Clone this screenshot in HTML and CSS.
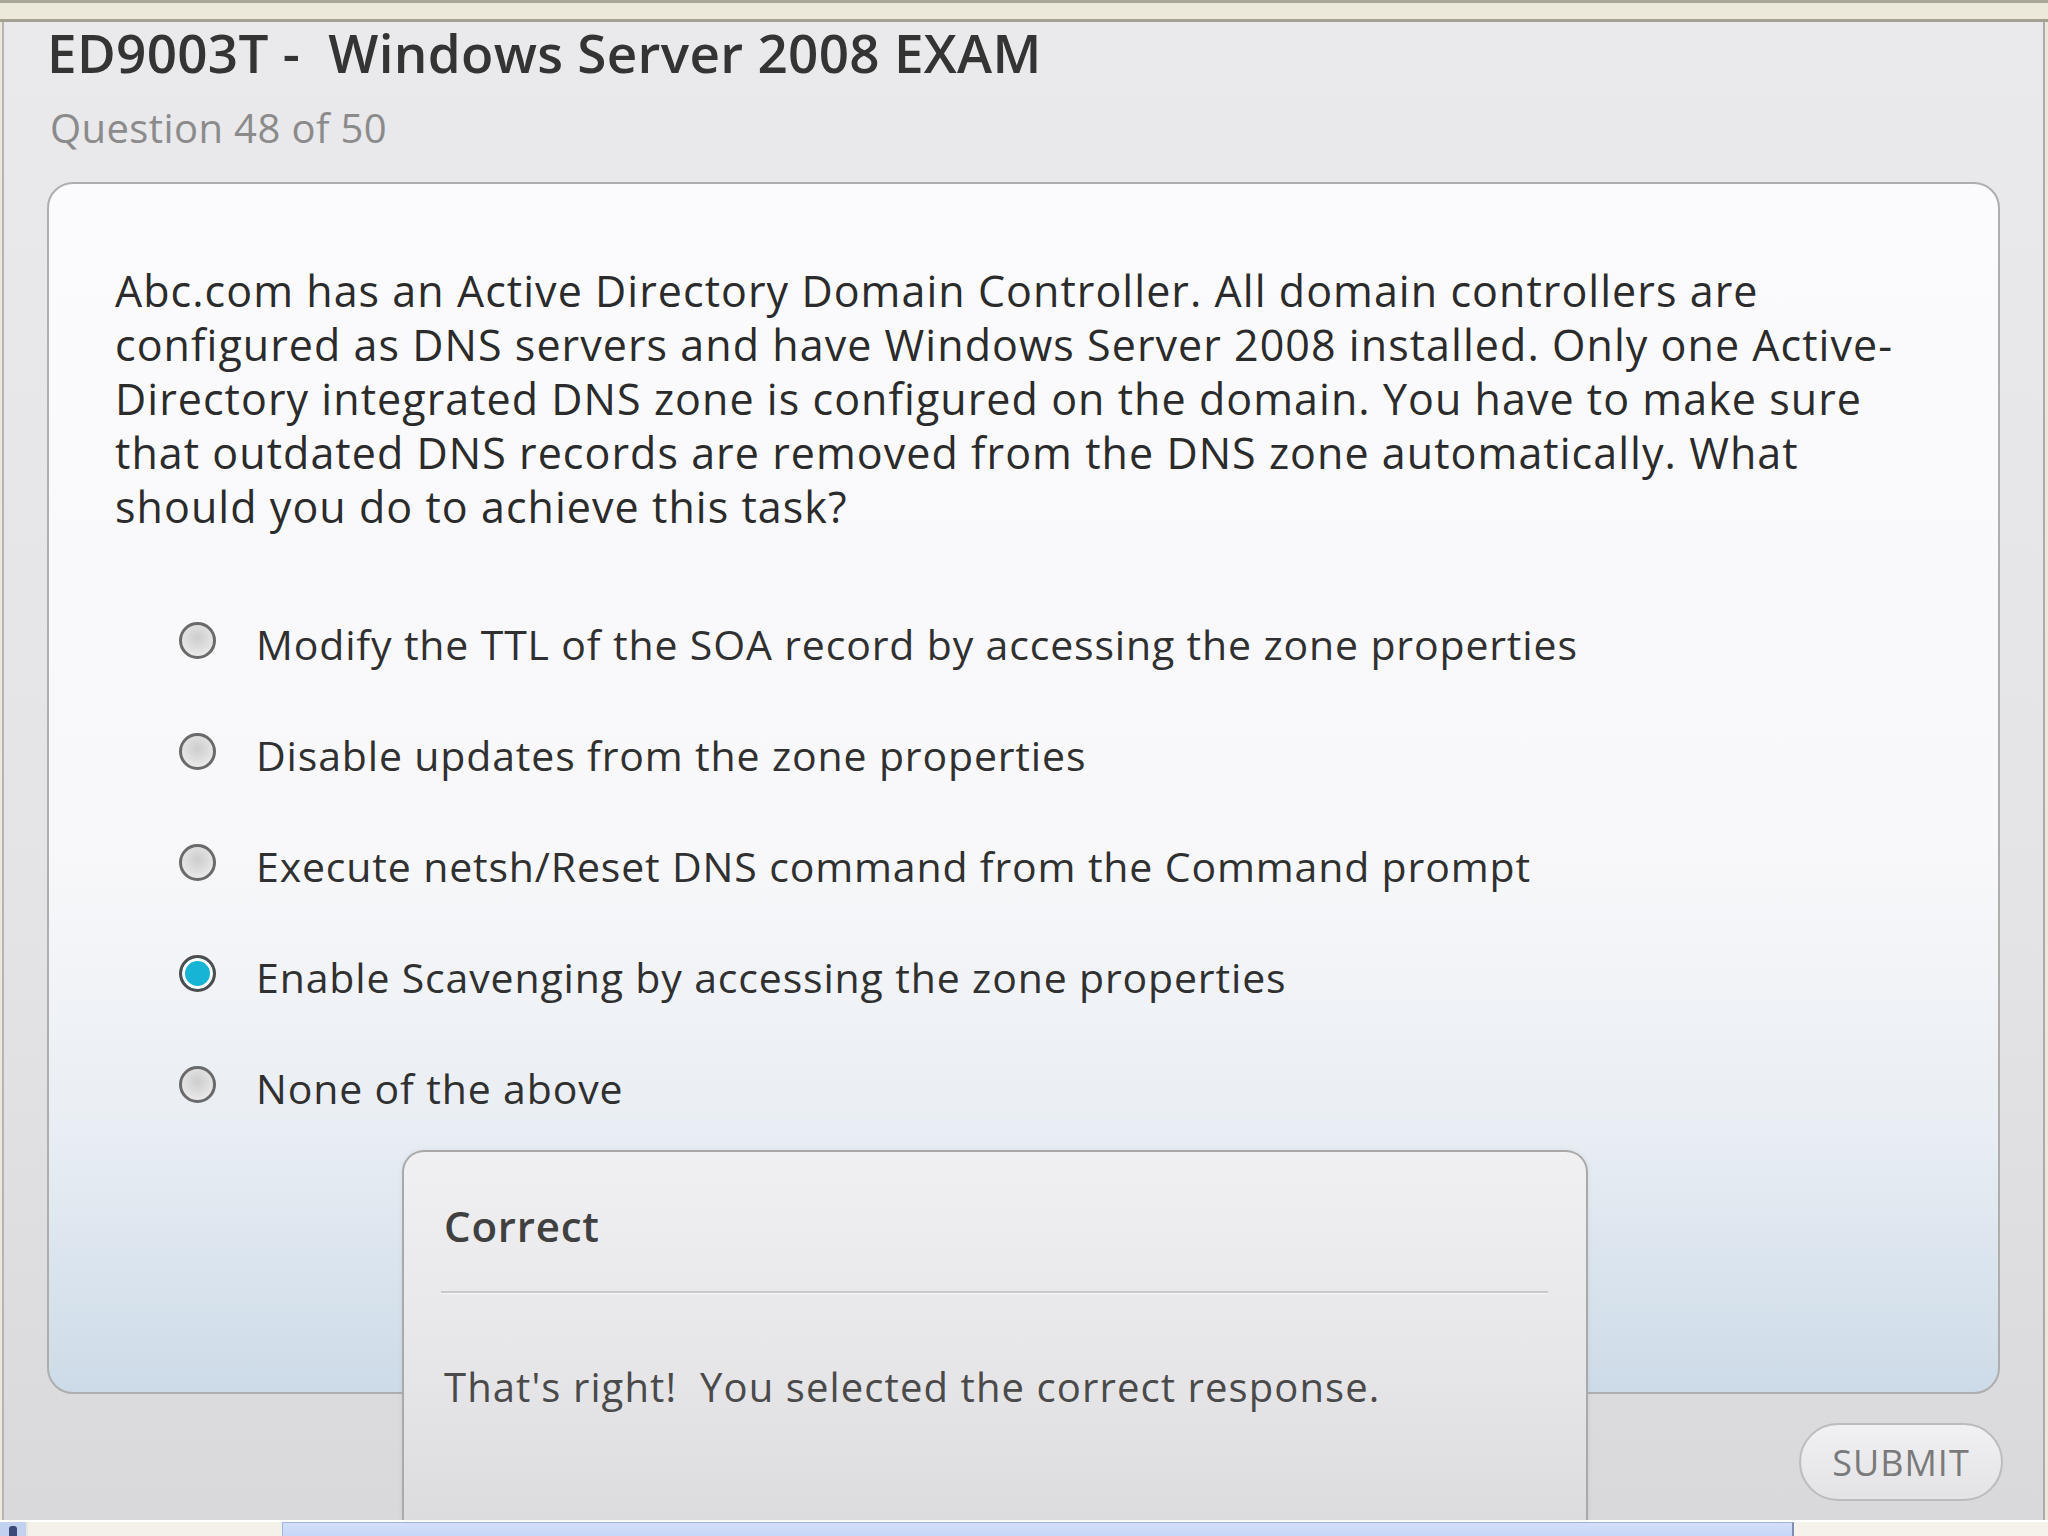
FILE: index.html
```html
<!DOCTYPE html>
<html lang="en">
<head>
<meta charset="utf-8">
<title>ED9003T - Windows Server 2008 EXAM</title>
<link rel="stylesheet" href="styles.css">
</head>
<body>
<div class="topbar"></div>
<main class="app">
  <header class="exam-head">
    <h1 class="exam-title">ED9003T -&nbsp; Windows Server 2008 EXAM</h1>
    <p class="exam-progress">Question 48 of 50</p>
  </header>
  <section class="card">
    <p class="question">Abc.com has an Active Directory Domain Controller. All domain controllers are<br>configured as DNS servers and have Windows Server 2008 installed. Only one Active-<br>Directory integrated DNS zone is configured on the domain. You have to make sure<br>that outdated DNS records are removed from the DNS zone automatically. What<br>should you do to achieve this task?</p>
    <div class="options">
      <div class="option"><span class="radio"></span><span class="option-text">Modify the TTL of the SOA record by accessing the zone properties</span></div>
      <div class="option"><span class="radio"></span><span class="option-text">Disable updates from the zone properties</span></div>
      <div class="option"><span class="radio"></span><span class="option-text">Execute netsh/Reset DNS command from the Command prompt</span></div>
      <div class="option"><span class="radio checked"></span><span class="option-text">Enable Scavenging by accessing the zone properties</span></div>
      <div class="option"><span class="radio"></span><span class="option-text">None of the above</span></div>
    </div>
  </section>
  <footer class="actions">
    <button class="submit" type="button">SUBMIT</button>
  </footer>
  <div class="feedback">
    <h2 class="feedback-title">Correct</h2>
    <hr class="feedback-rule">
    <p class="feedback-text">That's right!&nbsp; You selected the correct response.</p>
  </div>
</main>
<div class="taskbar">
  <span class="tb-start"><span class="tb-glyph"></span></span>
  <span class="tb-quick"></span>
  <span class="tb-task"></span>
  <span class="tb-tray"></span>
</div>
</body>
</html>
```
FILE: styles.css
```css
* { box-sizing: border-box; }

html, body {
  margin: 0;
  padding: 0;
}

body {
  width: 2048px;
  height: 1536px;
  overflow: hidden;
  background: #ece9da;
  font-family: "Open Sans", "Noto Sans", sans-serif;
  color: #2e2e2e;
}

.topbar {
  height: 22px;
  background: #ece9da;
  border-top: 3px solid #a9a796;
  border-bottom: 3px solid #a3a192;
}

.app {
  position: relative;
  height: 1498px;
  margin: 0 3px 0 2px;
  border-left: 2px solid #b4b4b4;
  border-right: 2px solid #ababab;
  background: linear-gradient(180deg, #eae9eb 0%, #e4e3e5 60%, #d9d8da 100%);
  display: flex;
  flex-direction: column;
}

.exam-head {
  padding: 3px 0 0 43px;
}

.exam-title {
  margin: 0;
  font-size: 53px;
  font-weight: 600;
  line-height: 56px;
  letter-spacing: 0.3px;
  color: #343434;
}

.exam-progress {
  margin: 24px 0 0 3px;
  font-size: 40px;
  line-height: 46px;
  letter-spacing: 0.4px;
  color: #8b8b8b;
}

.card {
  margin: 31px 43px 0 43px;
  border: 2px solid #aeaeae;
  border-radius: 26px;
  background: linear-gradient(180deg, #fbfbfd 0%, #f8f8fa 55%, #e9eef4 78%, #cddbe8 100%);
  padding: 80px 40px 249px 66px;
}

.question {
  margin: 0;
  font-size: 43px;
  line-height: 54px;
  letter-spacing: 1.05px;
  color: #2b2b2b;
  white-space: nowrap;
}

.options {
  margin-top: 54px;
  padding-left: 64px;
  display: flex;
  flex-direction: column;
}

.option {
  height: 111px;
  display: flex;
  align-items: center;
  gap: 40px;
}

.radio {
  flex: none;
  width: 37px;
  height: 37px;
  border-radius: 50%;
  border: 3px solid #6a6a6a;
  background: radial-gradient(circle at 50% 40%, #cdcdcd 0%, #dddddd 45%, #f3f3f3 100%);
  margin-top: -6px;
}

.radio.checked {
  border-color: #4d4d4d;
  background: #18b4d6;
  box-shadow: inset 0 0 0 3px #ffffff;
}

.option-text {
  font-size: 41px;
  line-height: 48px;
  letter-spacing: 0.85px;
  color: #303030;
}

.actions {
  flex: 1;
  display: flex;
  justify-content: flex-end;
  align-items: flex-start;
  padding: 29px 40px 0 0;
}

.submit {
  width: 204px;
  height: 78px;
  border: 2px solid #bcbcbc;
  border-radius: 40px;
  background: linear-gradient(180deg, #f1f1f3 0%, #e3e3e5 100%);
  font-family: "Open Sans", "Noto Sans", sans-serif;
  font-size: 36px;
  color: #7a7a7a;
  letter-spacing: 1px;
  padding: 0;
}

.feedback {
  position: absolute;
  left: 398px;
  top: 1128px;
  width: 1186px;
  bottom: 0;
  border: 2px solid #a9a9a9;
  border-bottom: none;
  border-radius: 22px 22px 0 0;
  background: linear-gradient(180deg, #f0f0f2 0%, #e6e5e7 60%, #dcdbdd 100%);
  padding: 50px 38px 0 37px;
  box-shadow: 0 0 6px rgba(0, 0, 0, 0.06);
}

.feedback-title {
  margin: 0 0 0 3px;
  font-size: 42px;
  font-weight: 600;
  line-height: 48px;
  letter-spacing: 0.8px;
  color: #404040;
}

.feedback-rule {
  margin: 41px 0 0 0;
  border: none;
  border-top: 2px solid #c9c9cb;
  border-bottom: 1px solid #f7f7f9;
  height: 0;
}

.feedback-text {
  margin: 70px 0 0 3px;
  font-size: 40px;
  line-height: 46px;
  letter-spacing: 1.1px;
  color: #4a4a4a;
}

.taskbar {
  height: 16px;
  display: flex;
  border-top: 2px solid #ffffff;
  background: #f3f1ea;
}

.tb-start {
  width: 28px;
  background: #c3d1f0;
  position: relative;
  border-right: 2px solid #e8e6df;
}

.tb-glyph {
  position: absolute;
  left: 9px;
  top: 4px;
  width: 8px;
  height: 10px;
  background: #3b4a78;
  border-radius: 3px 3px 0 0;
}

.tb-quick {
  width: 254px;
  background: #f3f1ea;
}

.tb-task {
  width: 1512px;
  background: linear-gradient(180deg, #d4e0fa 0%, #c6d6f6 100%);
  border-top: 1px solid #9fb5e0;
  border-left: 1px solid #9fb5e0;
  border-right: 2px solid #7d8fb8;
}

.tb-tray {
  flex: 1;
  background: #f5f2e9;
}
```
